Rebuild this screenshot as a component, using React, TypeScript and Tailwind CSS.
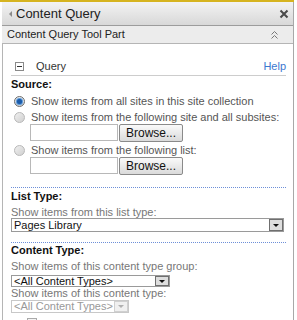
export default function App() {
  return (
    <div className="w-[297px] h-[320px] overflow-hidden bg-white text-[#333] font-['Liberation_Sans',Arial,sans-serif] text-[11px] leading-none">
      <div className="w-[294px] h-[2px] bg-[#d6b420]" />
      <div className="w-[292px] ml-[2px] border-r border-[#a8a8a8] h-[318px] flex flex-col">
        {/* title bar */}
        <div className="shrink-0 h-[24px] flex items-center justify-between bg-gradient-to-b from-[#f3f3f3] to-[#d8d8d8] border-b border-[#9c9c9c] pl-[7px] pr-[4px]">
          <div className="flex items-center gap-[4px]">
            <span className="w-0 h-0 border-t-[3px] border-b-[3px] border-r-[3px] border-t-transparent border-b-transparent border-r-[#8a8a8a]" />
            <span className="text-[13px] text-[#222]">Content Query</span>
          </div>
          <svg width="10" height="10" viewBox="0 0 10 10">
            <path d="M1.5 1.5 L8.5 8.5 M8.5 1.5 L1.5 8.5" stroke="#4a4a4a" strokeWidth="2" />
          </svg>
        </div>
        {/* tool part bar */}
        <div className="shrink-0 h-[18px] flex items-center justify-between bg-[#ececec] border-b border-[#b5b5b5] pl-[5px] pr-[15px]">
          <span className="text-[11px] text-[#222]">Content Query Tool Part</span>
          <svg width="7" height="8" viewBox="0 0 7 8">
            <path d="M0.5 3.5 L3.5 0.5 L6.5 3.5 M0.5 7.5 L3.5 4.5 L6.5 7.5" stroke="#777" strokeWidth="1" fill="none" />
          </svg>
        </div>
        {/* body */}
        <div className="flex-1 min-h-0 border-l border-[#b5b5b5] pl-[8px] pr-[7px] pt-[15px]">
          <div className="h-[14px] flex items-center justify-between pl-[4px]">
            <div className="flex items-center gap-[12px]">
              <span className="w-[9px] h-[9px] border border-[#8a8a8a] flex items-center justify-center">
                <span className="w-[5px] h-[1px] bg-[#333]" />
              </span>
              <span className="text-[#333]">Query</span>
            </div>
            <span className="text-[#3b78cf]">Help</span>
          </div>
          <div className="h-px bg-[#cdcdcd] mt-[2px]" />
          <div className="h-[14px] flex items-center font-bold text-[#111] mt-[1px]">Source:</div>
          <div className="flex flex-col pl-[3px] text-[#555]">
            <div className="mt-[3px]">
              <Radio checked label="Show items from all sites in this site collection" />
            </div>
            <div className="mt-[2px]">
              <Radio label="Show items from the following site and all subsites:" />
            </div>
            <PathRow />
            <div className="mt-[1px]">
              <Radio label="Show items from the following list:" />
            </div>
            <PathRow />
          </div>
          <div className="border-t border-dotted border-[#6d8fd8] mt-[12px]" />
          <div className="h-[14px] flex items-center font-bold text-[#111] mt-[1px]">List Type:</div>
          <div className="h-[12px] flex items-center text-[#777] mt-[3px]">Show items from this list type:</div>
          <Select value="Pages Library" width="w-[273px]" height="h-[14px]" />
          <div className="border-t border-dotted border-[#6d8fd8] mt-[10px]" />
          <div className="h-[14px] flex items-center font-bold text-[#111]">Content Type:</div>
          <div className="h-[12px] flex items-center text-[#777] mt-[3px]">Show items of this content type group:</div>
          <div className="mt-[3px]">
            <Select value="<All Content Types>" width="w-[159px]" height="h-[12px]" />
          </div>
          <div className="h-[12px] flex items-center text-[#777]">Show items of this content type:</div>
          <div className="mt-[1px]">
            <Select value="<All Content Types>" width="w-[118px]" height="h-[13px]" disabled />
          </div>
          <div className="w-[10px] h-[10px] border border-[#aaa] bg-[#f4f4f4] ml-[16px] mt-[5px]" />
        </div>
      </div>
    </div>
  )
}

function Radio({ checked, label }: { checked?: boolean; label: string }) {
  return (
    <div className="h-[14px] flex items-center gap-[6px]">
      <span
        className={
          checked
            ? 'w-[11px] h-[11px] rounded-full border border-[#6b6b6b] bg-gradient-to-b from-[#f4f4f4] to-[#d4d4d4] flex items-center justify-center'
            : 'w-[11px] h-[11px] rounded-full border border-[#b8b8b8] bg-gradient-to-br from-[#f0f0f0] to-[#d0d0d0]'
        }
      >
        {checked && <span className="w-[5px] h-[5px] rounded-full bg-[#1a5aa8] shadow-[0_0_1px_1px_#4b8fd6]" />}
      </span>
      <span>{label}</span>
    </div>
  )
}

function PathRow() {
  return (
    <div className="h-[18px] flex items-start gap-[1px] ml-[16px]">
      <div className="w-[88px] h-[17px] border border-[#b8b8b8] bg-white" />
      <div className="w-[64px] h-[18px] border border-[#8a8a8a] rounded-[2px] bg-gradient-to-b from-[#fafafa] to-[#dadada] flex items-center justify-center text-[12px] text-[#111]">
        Browse...
      </div>
    </div>
  )
}

function Select({ value, width, height, disabled }: { value: string; width: string; height: string; disabled?: boolean }) {
  return (
    <div className={`${width} ${height} border ${disabled ? 'border-[#c8c8c8] text-[#999]' : 'border-[#9a9a9a] text-[#111]'} flex items-stretch bg-white`}>
      <div className="flex-1 flex items-center pl-[2px] whitespace-nowrap">{value}</div>
      <div className={`w-[14px] shrink-0 border ${disabled ? 'border-[#d0d0d0] bg-[#f0f0f0]' : 'border-[#6f6f6f] bg-[#dedede]'} flex items-center justify-center`}>
        <span className={`w-0 h-0 border-l-[3px] border-r-[3px] border-t-[3px] border-l-transparent border-r-transparent ${disabled ? 'border-t-[#b0b0b0]' : 'border-t-[#111]'}`} />
      </div>
    </div>
  )
}
